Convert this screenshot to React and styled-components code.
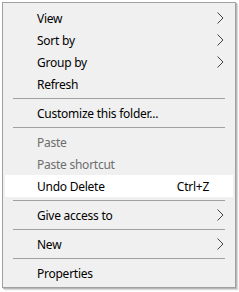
import React from "react";
import styled, { createGlobalStyle } from "styled-components";

const Global = createGlobalStyle`
  html, body { margin: 0; padding: 0; background: #ffffff; }
  body { font-family: "Noto Sans", "Open Sans", sans-serif; }
`;

const Page = styled.div`
  width: 239px;
  height: 292px;
  padding: 2px 0 0 2px;
  box-sizing: border-box;
  background: #ffffff;
`;

const Menu = styled.div`
  width: 234px;
  box-sizing: border-box;
  background: #f0f0f0;
  border: 1px solid #a0a0a0;
  box-shadow: 1px 1px 0 #b8b8b8, 2px 2px 1px rgba(0, 0, 0, 0.15);
  padding: 4px 2px 3px 2px;
  display: flex;
  flex-direction: column;
`;

const Item = styled.div`
  height: 22px;
  display: flex;
  align-items: center;
  padding: 0 9px 0 32px;
  font-size: 12px;
  letter-spacing: -0.25px;
  color: ${(p) => (p.$disabled ? "#6d6d6d" : "#000000")};
  background: ${(p) => (p.$active ? "#ffffff" : "transparent")};
`;

const Label = styled.span`
  flex: 1;
  white-space: nowrap;
`;

const Shortcut = styled.span`
  margin-right: 8px;
  white-space: nowrap;
`;

const ArrowBox = styled.span`
  width: 7px;
  height: 12px;
  display: flex;
  align-items: center;
  justify-content: center;
`;

const Separator = styled.div`
  height: 1px;
  margin: 3px 8px 3px 8px;
  background: #a0a0a0;
`;

const Chevron = () => (
  <svg width="7" height="12" viewBox="0 0 7 12">
    <polyline
      points="0.5,0.5 6,6 0.5,11.5"
      fill="none"
      stroke="#444444"
      strokeWidth="1"
    />
  </svg>
);

const MenuItem = ({ label, shortcut, sub, disabled, active }) => (
  <Item $disabled={disabled} $active={active}>
    <Label>{label}</Label>
    {shortcut && <Shortcut>{shortcut}</Shortcut>}
    <ArrowBox>{sub && <Chevron />}</ArrowBox>
  </Item>
);

export default function App() {
  return (
    <>
      <Global />
      <Page>
        <Menu>
          <MenuItem label="View" sub />
          <MenuItem label="Sort by" sub />
          <MenuItem label="Group by" sub />
          <MenuItem label="Refresh" />
          <Separator />
          <MenuItem label="Customize this folder..." />
          <Separator />
          <MenuItem label="Paste" disabled />
          <MenuItem label="Paste shortcut" disabled />
          <MenuItem label="Undo Delete" shortcut="Ctrl+Z" active />
          <Separator />
          <MenuItem label="Give access to" sub />
          <Separator />
          <MenuItem label="New" sub />
          <Separator />
          <MenuItem label="Properties" />
        </Menu>
      </Page>
    </>
  );
}
